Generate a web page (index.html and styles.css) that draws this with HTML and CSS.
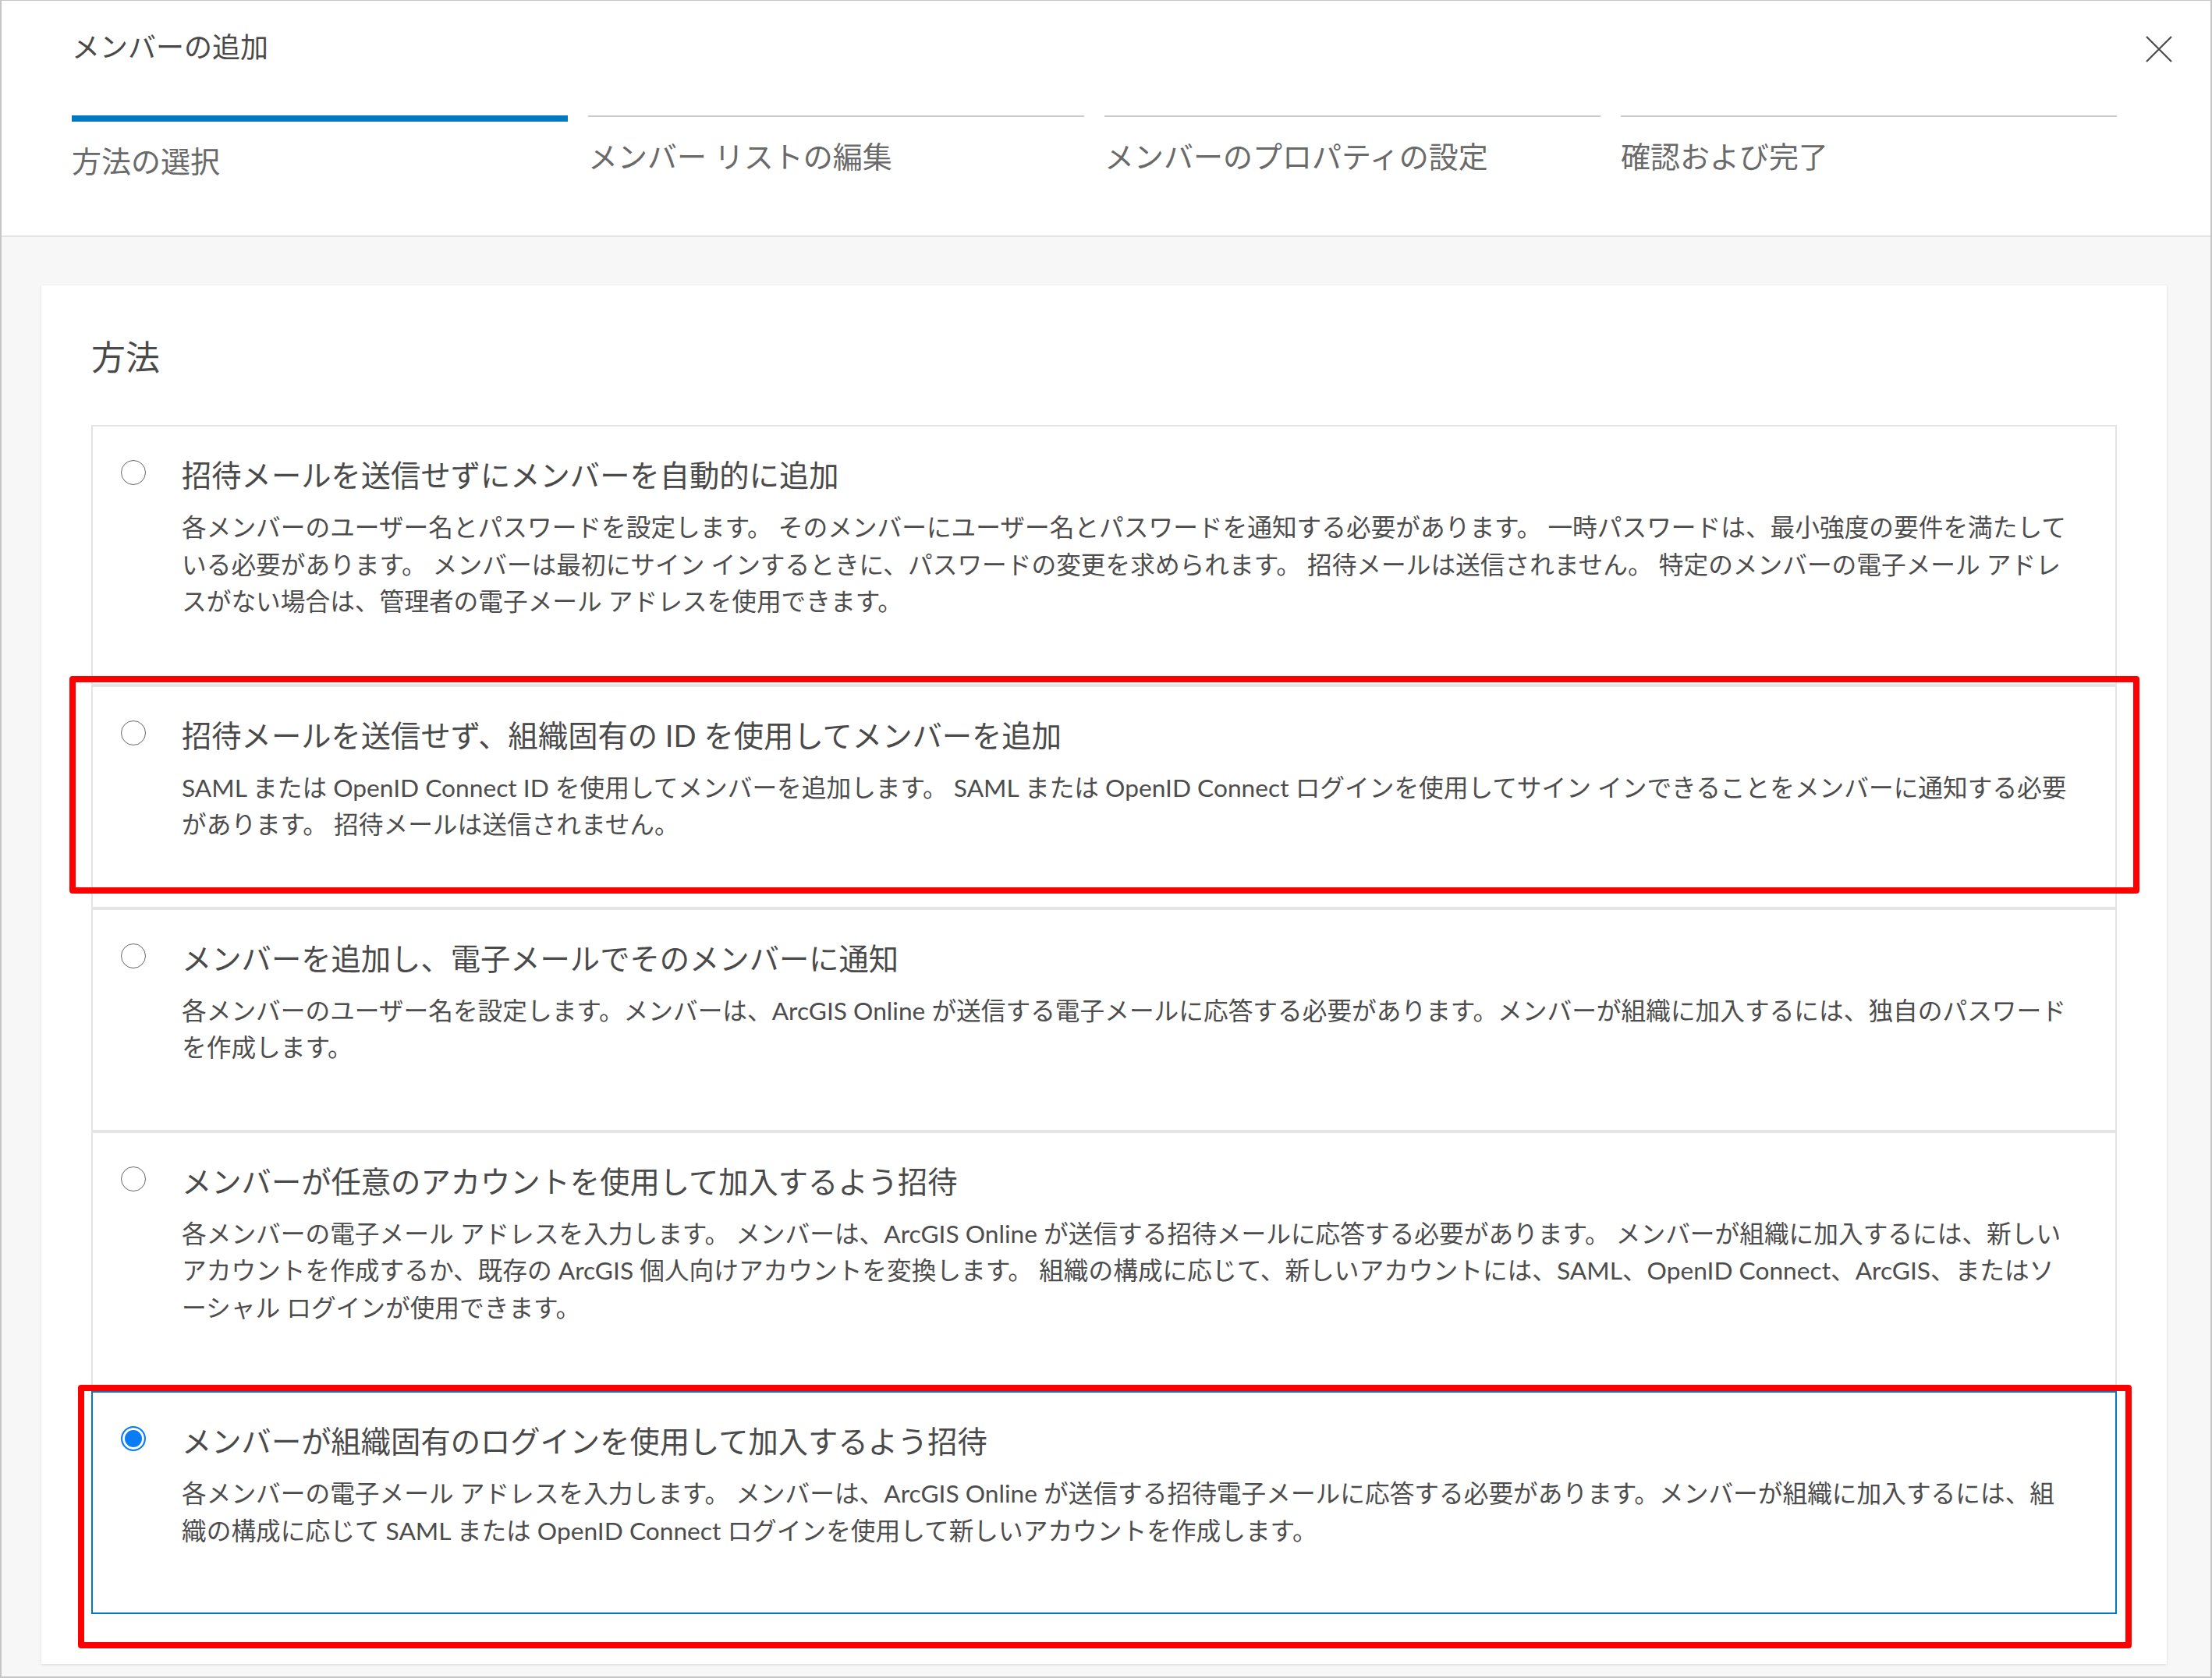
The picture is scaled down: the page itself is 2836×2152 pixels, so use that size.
FILE: index.html
```html
<!DOCTYPE html>
<html lang="ja">
<head>
    <title>メンバーの追加</title>
    <meta name="viewport" content="width=device-width, initial-scale=1.0">
    <meta charset="utf-8">
    <link rel="stylesheet" href="styles.css">
</head>

<body>
    <div class="dialog">
        <div class="header">
            <div class="header-top">
                <header>メンバーの追加</header>
                <button class="close" title="閉じる">
                    <svg width="34" height="34" viewBox="0 0 34 34">
                        <path d="M1 1 L33 33 M33 1 L1 33" stroke="#4a4a4a" stroke-width="2.2" fill="none"/>
                    </svg>
                </button>
            </div>
            <div class="steps">
                <div class="step active"><div class="step-bar"></div><span>方法の選択</span></div>
                <div class="step"><div class="step-bar"></div><span>メンバー リストの編集</span></div>
                <div class="step"><div class="step-bar"></div><span>メンバーのプロパティの設定</span></div>
                <div class="step"><div class="step-bar"></div><span>確認および完了</span></div>
            </div>
        </div>

        <div class="content">
            <div class="card">
                <h2>方法</h2>
                <div class="options">
                    <div class="option">
                        <span class="radio"></span>
                        <div class="option-text">
                            <div class="option-title">招待メールを送信せずにメンバーを自動的に追加</div>
                            <p class="option-desc">各メンバーのユーザー名とパスワードを設定します。 そのメンバーにユーザー名とパスワードを通知する必要があります。 一時パスワードは、最小強度の要件を満たしている必要があります。 メンバーは最初にサイン インするときに、パスワードの変更を求められます。 招待メールは送信されません。 特定のメンバーの電子メール アドレスがない場合は、管理者の電子メール アドレスを使用できます。</p>
                        </div>
                    </div>
                    <div class="option">
                        <span class="radio"></span>
                        <div class="option-text">
                            <div class="option-title">招待メールを送信せず、組織固有の ID を使用してメンバーを追加</div>
                            <p class="option-desc">SAML または OpenID Connect ID を使用してメンバーを追加します。 SAML または OpenID Connect ログインを使用してサイン インできることをメンバーに通知する必要があります。 招待メールは送信されません。</p>
                        </div>
                        <span class="mark mark-id"></span>
                    </div>
                    <div class="option">
                        <span class="radio"></span>
                        <div class="option-text">
                            <div class="option-title">メンバーを追加し、電子メールでそのメンバーに通知</div>
                            <p class="option-desc">各メンバーのユーザー名を設定します。メンバーは、ArcGIS Online が送信する電子メールに応答する必要があります。メンバーが組織に加入するには、独自のパスワードを作成します。</p>
                        </div>
                    </div>
                    <div class="option">
                        <span class="radio"></span>
                        <div class="option-text">
                            <div class="option-title">メンバーが任意のアカウントを使用して加入するよう招待</div>
                            <p class="option-desc">各メンバーの電子メール アドレスを入力します。 メンバーは、ArcGIS Online が送信する招待メールに応答する必要があります。 メンバーが組織に加入するには、新しいアカウントを作成するか、既存の ArcGIS 個人向けアカウントを変換します。 組織の構成に応じて、新しいアカウントには、SAML、OpenID Connect、ArcGIS、またはソーシャル ログインが使用できます。</p>
                        </div>
                    </div>
                    <div class="option selected">
                        <span class="radio checked"></span>
                        <div class="option-text">
                            <div class="option-title">メンバーが組織固有のログインを使用して加入するよう招待</div>
                            <p class="option-desc">各メンバーの電子メール アドレスを入力します。 メンバーは、ArcGIS Online が送信する招待電子メールに応答する必要があります。メンバーが組織に加入するには、組織の構成に応じて SAML または OpenID Connect ログインを使用して新しいアカウントを作成します。</p>
                        </div>
                        <span class="mark mark-login"></span>
                    </div>
                </div>
            </div>
        </div>
    </div>
</body>
</html>
```

FILE: styles.css
```css
*{
    box-sizing: border-box;
}

body{
    margin: 0;
    background: #ffffff;
    font-family: Lato, "Noto Sans CJK JP", sans-serif;
    color: #4a4a4a;
}

.dialog{
    position: relative;
    display: flex;
    flex-direction: column;
    height: 2152px;
    border: 2px solid #c6c6c6;
    border-top-width: 1px;
    background: #f7f7f7;
}

/* header with steps */
.header{
    background: #ffffff;
    padding: 37px 49px 73px 90px;
    border-bottom: 2px solid #e3e3e3;
}

.header-top{
    display: flex;
    justify-content: space-between;
    align-items: flex-start;
}

.header-top header{
    font-size: 36px;
    line-height: 44px;
    color: #4a4a4a;
}

.close{
    display: flex;
    margin-top: 8px;
    padding: 0;
    border: none;
    background: transparent;
}

.steps{
    display: grid;
    grid-template-columns: repeat(4, 1fr);
    column-gap: 26px;
    margin-top: 66px;
    margin-right: 71px;
}

.step-bar{
    height: 2px;
    margin-bottom: 6px;
    background: #cccccc;
}

.step.active .step-bar{
    height: 8px;
    margin-bottom: 0;
    background: #0079c1;
}

.step span{
    display: block;
    margin-top: 27px;
    font-size: 38px;
    line-height: 46px;
    color: #6a6a6a;
}

/* body */
.content{
    flex: 1;
    padding: 62px 56px 17px 51px;
}

.card{
    background: #ffffff;
    padding: 66px 64px 64px;
    box-shadow: 0 1px 3px rgba(0, 0, 0, 0.12);
}

.card h2{
    margin: 0 0 60px;
    font-size: 44px;
    font-weight: normal;
    line-height: 53px;
}

.option{
    position: relative;
    display: flex;
    border: 2px solid #e4e4e4;
    padding: 38px 54px 81px 36px;
}

.option.selected{
    border-color: #0079c1;
}

.radio{
    flex: none;
    width: 32px;
    height: 32px;
    margin-top: 5px;
    margin-right: 46px;
    border: 1.5px solid #666666;
    border-radius: 50%;
    background: #ffffff;
}

.radio.checked{
    border: 2px solid #0a7cf6;
    background: #0a7cf6;
    box-shadow: inset 0 0 0 3px #ffffff;
}

.option-text{
    flex: 1;
}

.option-title{
    font-size: 38.3px;
    line-height: 49px;
    color: #4a4a4a;
}

.option-desc{
    margin: 19px 0 0;
    font-size: 31.7px;
    line-height: 47.5px;
    color: #4d4d4d;
}

/* red callouts drawn over the screenshot */
.mark{
    position: absolute;
    border: 8px solid #ff0000;
    border-radius: 4px;
    pointer-events: none;
}

.mark-id{
    top: -14px;
    left: -30px;
    right: -31px;
    height: 279px;
}

.mark-login{
    top: -10px;
    left: -19px;
    right: -21px;
    height: 338px;
}
```
